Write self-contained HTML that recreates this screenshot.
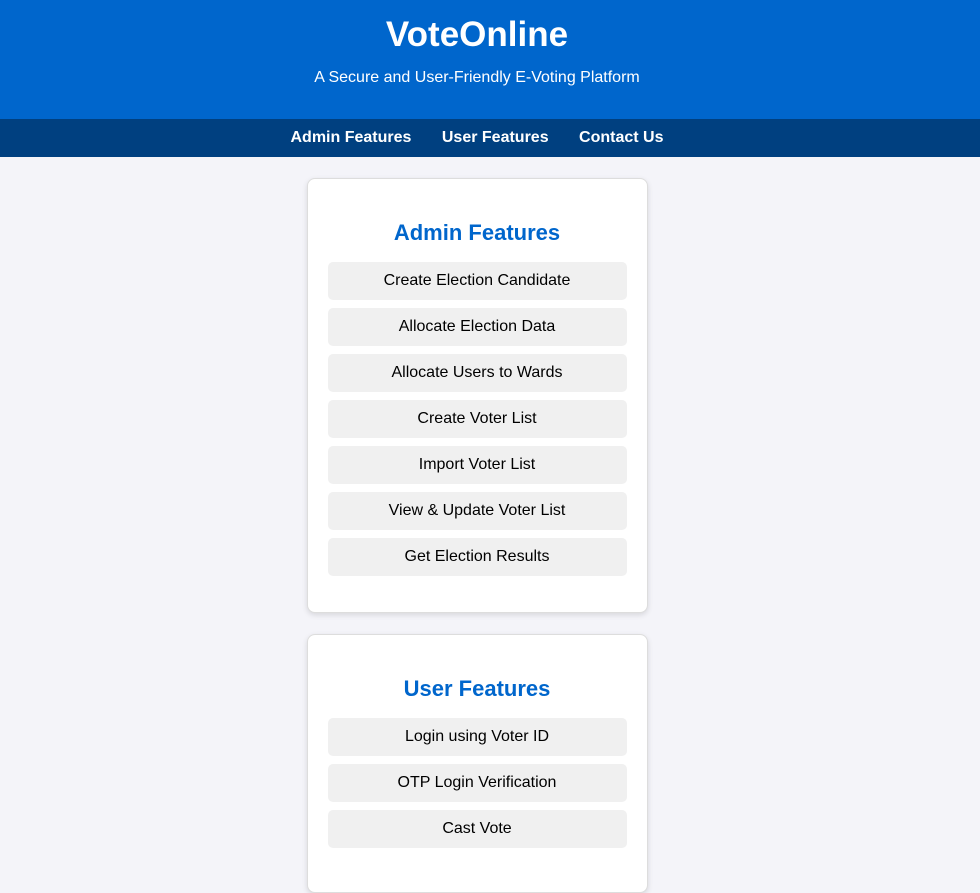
<!DOCTYPE html>
<html><head><meta charset="utf-8"><style>
*{box-sizing:border-box;margin:0;padding:0}
html{background:#f4f4f9}
body{width:954px;height:821px;overflow:hidden;background:#f4f4f9;font-family:"Liberation Sans",Arial,sans-serif}
header{background:#0066cc;color:#fff;text-align:center;height:119px;padding-top:15px;width:980px;padding-right:26px}
header h1{font-size:35px;font-weight:bold;line-height:40px}
header p{font-size:16px;margin-top:14px}
nav{background:#004080;height:38px;text-align:center;line-height:38px;width:980px;padding-right:26px}
nav a{color:#fff;font-weight:bold;font-size:16px;margin:0 13px;text-decoration:none}
.card{width:341px;margin:21px auto 0;background:#fff;border:1px solid #ddd;border-radius:8px;box-shadow:0 2px 6px rgba(0,0,0,.12);padding:40px 20px 36px}
.card h2{color:#0066cc;font-size:22px;text-align:center;line-height:28px;margin-bottom:15px}
.btn{height:38px;background:#f0f0f0;border-radius:5px;margin-bottom:8px;text-align:center;line-height:38px;font-size:16px;color:#000}
</style></head><body>
<header><h1>VoteOnline</h1><p>A Secure and User-Friendly E-Voting Platform</p></header>
<nav><a>Admin Features</a> <a>User Features</a> <a>Contact Us</a></nav>
<div class="card"><h2>Admin Features</h2>
<div class="btn">Create Election Candidate</div><div class="btn">Allocate Election Data</div><div class="btn">Allocate Users to Wards</div><div class="btn">Create Voter List</div><div class="btn">Import Voter List</div><div class="btn">View &amp; Update Voter List</div><div class="btn" style="margin-bottom:0">Get Election Results</div></div>
<div class="card"><h2>User Features</h2>
<div class="btn">Login using Voter ID</div><div class="btn">OTP Login Verification</div><div class="btn">Cast Vote</div></div>
</body></html>
